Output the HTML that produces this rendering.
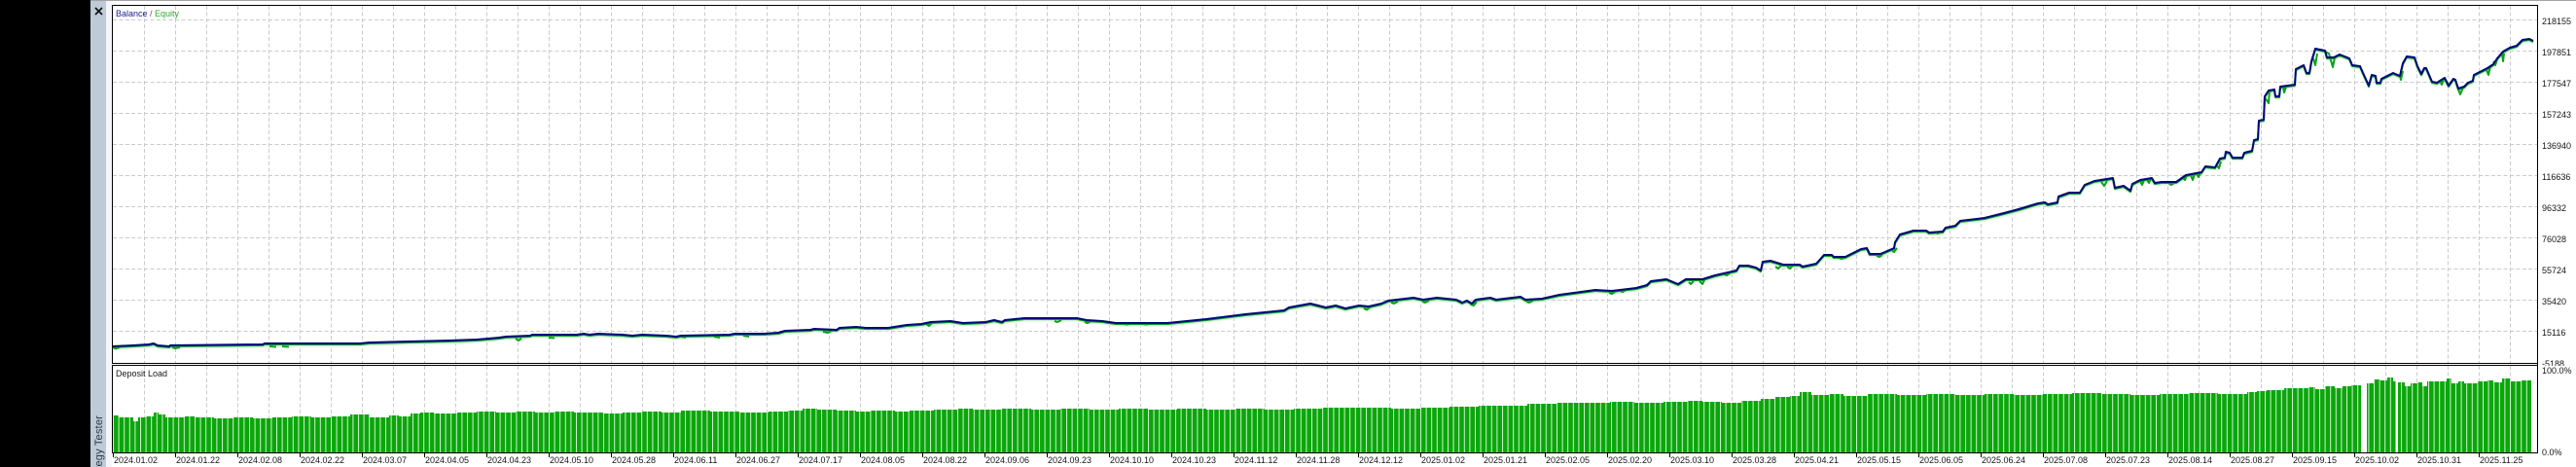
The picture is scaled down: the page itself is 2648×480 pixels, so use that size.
<!DOCTYPE html>
<html lang="en">
<head>
<meta charset="utf-8">
<title>Strategy Tester</title>
<style>
html,body{margin:0;padding:0;background:#000;width:2648px;height:480px;overflow:hidden}
svg{display:block}
text{font-family:"Liberation Sans",sans-serif;font-size:9px;fill:#151515}
</style>
</head>
<body>
<svg xmlns="http://www.w3.org/2000/svg" width="2648" height="480" viewBox="0 0 2648 480">
<defs>
<pattern id="gaps" x="116" y="0" width="5.6" height="10" patternUnits="userSpaceOnUse"><rect width="1" height="10" fill="#d2f0d2"/></pattern>
<path id="bal" d="M116 356L137 355L153 354L158 353L162 355L174 356L175 355L270 354L272 353L370 353L380 352L420 351L462 350L490 349L502 348L513 347L520 346L545 345L547 344L593 344L600 343L606 344L615 343L640 344L650 345L660 344L685 345L695 346L700 345L750 344L755 343L785 343L800 342L807 340L833 339L837 338L860 339L863 337L880 336L890 337L913 337L932 334L947 333L957 331L977 330L990 332L1013 331L1022 329L1030 331L1033 329L1053 327L1067 327L1087 327L1107 327L1117 329L1133 330L1147 332L1200 332L1240 328L1280 323L1320 319L1325 316L1347 312L1363 316L1373 314L1383 317L1397 314L1407 315L1420 312L1427 309L1453 306L1463 308L1477 306L1497 308L1503 311L1508 309L1513 312L1517 308L1532 306L1538 308L1563 305L1568 308L1585 307L1603 303L1640 298L1657 299L1682 296L1693 293L1697 289L1713 287L1725 292L1733 287L1750 287L1763 283L1785 278L1788 273L1797 273L1805 275L1810 278L1812 269L1820 268L1833 272L1850 272L1853 274L1867 271L1875 262L1883 262L1885 264L1897 264L1913 256L1919 255L1922 261L1933 261L1947 255L1948 249L1953 241L1967 237L1980 237L1983 239L1997 238L2000 234L2010 232L2015 227L2040 224L2060 219L2075 215L2095 209L2102 208L2105 210L2115 208L2116 202L2127 198L2138 198L2143 190L2153 186L2172 183L2174 193L2183 191L2190 196L2192 189L2200 185L2212 183L2215 188L2222 187L2237 187L2247 180L2263 177L2267 171L2277 172L2282 163L2287 162L2288 156L2292 157L2295 162L2305 162L2307 157L2315 155L2317 144L2321 143L2322 124L2327 123L2328 99L2332 93L2338 92L2339 99L2343 99L2344 89L2359 87L2360 71L2368 67L2371 75L2374 75L2376 63L2380 50L2390 52L2392 59L2399 59L2405 56L2415 60L2418 67L2426 68L2430 77L2435 88L2438 77L2442 78L2443 85L2447 85L2448 81L2460 75L2467 78L2470 65L2474 58L2482 59L2485 68L2489 76L2492 70L2494 70L2500 84L2505 85L2513 80L2517 88L2522 81L2524 82L2527 91L2533 89L2537 85L2542 83L2543 77L2557 70L2563 66L2567 60L2573 53L2580 49L2587 47L2593 41L2600 40L2604 42"/>
</defs>

<!-- window chrome -->
<rect x="93" y="0" width="2555" height="480" fill="#fff"/>
<rect x="93" y="0" width="2555" height="1" fill="#a3a3a3"/>
<rect x="93" y="1" width="16" height="479" fill="#bdcbd9"/>
<rect x="109" y="1" width="6" height="479" fill="#f4f5f6"/>
<path d="M98 8L105 15M105 8L98 15" stroke="#111" stroke-width="1.7" fill="none"/>

<!-- grid -->
<g stroke="#cbcbcb" stroke-width="1" stroke-dasharray="4 2.4" fill="none" shape-rendering="crispEdges">
<path d="M116 20.5H2608M116 52.5H2608M116 84.5H2608M116 116.5H2608M116 148.5H2608M116 180.5H2608M116 212.5H2608M116 244.5H2608M116 276.5H2608M116 308.5H2608M116 340.5H2608"/>
<path d="M148.500 6V373M180.500 6V373M212.500 6V373M244.500 6V373M276.500 6V373M308.500 6V373M340.500 6V373M372.500 6V373M404.500 6V373M436.500 6V373M468.500 6V373M500.500 6V373M532.500 6V373M564.500 6V373M596.500 6V373M628.500 6V373M660.500 6V373M692.500 6V373M724.500 6V373M756.500 6V373M788.500 6V373M820.500 6V373M852.500 6V373M884.500 6V373M916.500 6V373M948.500 6V373M980.500 6V373M1012.500 6V373M1044.500 6V373M1076.500 6V373M1108.500 6V373M1140.500 6V373M1172.500 6V373M1204.500 6V373M1236.500 6V373M1268.500 6V373M1300.500 6V373M1332.500 6V373M1364.500 6V373M1396.500 6V373M1428.500 6V373M1460.500 6V373M1492.500 6V373M1524.500 6V373M1556.500 6V373M1588.500 6V373M1620.500 6V373M1652.500 6V373M1684.500 6V373M1716.500 6V373M1748.500 6V373M1780.500 6V373M1812.500 6V373M1844.500 6V373M1876.500 6V373M1908.500 6V373M1940.500 6V373M1972.500 6V373M2004.500 6V373M2036.500 6V373M2068.500 6V373M2100.500 6V373M2132.500 6V373M2164.500 6V373M2196.500 6V373M2228.500 6V373M2260.500 6V373M2292.500 6V373M2324.500 6V373M2356.500 6V373M2388.500 6V373M2420.500 6V373M2452.500 6V373M2484.500 6V373M2516.500 6V373M2548.500 6V373M2580.500 6V373"/>
</g>

<!-- equity / balance curves -->
<g fill="none" stroke-linejoin="round">
<use href="#bal" stroke="#d8f5d8" stroke-width="2" transform="translate(0 2.5)"/>
<use href="#bal" stroke="#0b9e2a" stroke-width="2" transform="translate(0 1)"/>
<path stroke="#0ba01a" stroke-width="2" d="M116 357L119 358.500L123 357M177 357L180 358L185 357M277 356L284 356.500M290 356L297 356.500M530 348L533 350L536 348M564 347L570 347.500M699 346L705 347M734 346L740 347M764 345L770 346M846 341L851 342L855 340M952 333L955 335L958 332M1084 330L1087 331L1091 329M1115 331L1118 332L1122 330M1155 333L1158 333.500L1162 333M1175 333L1178 333.500L1182 333M1402 317L1405 318.500L1408 316M1430 311L1433 312L1437 310M1462 310L1465 311L1469 309M1512 313L1515 314L1518 310M1569 310L1572 311L1576 309M1654 301L1657 302L1660 300M1665 299L1668 300L1671 298M1736 290L1738 292L1741 289M1747 289L1750 292L1752 288M1772 282L1775 283L1778 281M1825 274L1828 276L1831 273M1837 274L1840 276L1843 273M1890 265L1893 266L1897 265M1929 263L1932 264L1935 262M1945 258L1947 259L1950 255M1989 239L1992 240L1995 238M2160 187L2163 191L2166 186M2200 186L2202 190L2204 185M2207 185L2209 188L2211 184M2229 188L2232 190L2235 188M2244 183L2246 185L2248 180M2252 180L2254 185L2256 179M2258 179L2260 182L2262 178M2278 169L2281 173L2283 166M2328 100L2332 106L2333 93M2347 90L2348 95L2350 89M2378 60L2380 67L2382 55M2390 53L2394 55L2398 69L2400 59M2467 77L2468 82L2470 73M2508 83L2510 87L2512 82M2527 92L2529 97L2532 90M2556 72L2558 77L2560 68M2563 63L2565 67L2567 61M2572 55L2573 63L2574 55"/>
<use href="#bal" stroke="#00087a" stroke-width="2"/>
</g>

<!-- price labels -->
<g>
<text x="2613" y="25">218155</text>
<text x="2613" y="57">197851</text>
<text x="2613" y="89">177547</text>
<text x="2613" y="121">157243</text>
<text x="2613" y="153">136940</text>
<text x="2613" y="185">116636</text>
<text x="2613" y="217">96332</text>
<text x="2613" y="249">76028</text>
<text x="2613" y="281">55724</text>
<text x="2613" y="313">35420</text>
<text x="2613" y="345">15116</text>
<text x="2613" y="377">-5188</text>
</g>
<rect x="115" y="374" width="2494" height="106" fill="#fff"/>
<rect x="2609" y="376" width="39" height="104" fill="#fff"/>

<text transform="translate(105 427) rotate(-90)" text-anchor="end" style="font-size:11px;fill:#2b3640;letter-spacing:.2px">Strategy Tester</text>

<!-- sub window grid -->
<g stroke="#cbcbcb" stroke-width="1" stroke-dasharray="4 2.4" fill="none" shape-rendering="crispEdges">
<path d="M148.500 376V465M180.500 376V465M212.500 376V465M244.500 376V465M276.500 376V465M308.500 376V465M340.500 376V465M372.500 376V465M404.500 376V465M436.500 376V465M468.500 376V465M500.500 376V465M532.500 376V465M564.500 376V465M596.500 376V465M628.500 376V465M660.500 376V465M692.500 376V465M724.500 376V465M756.500 376V465M788.500 376V465M820.500 376V465M852.500 376V465M884.500 376V465M916.500 376V465M948.500 376V465M980.500 376V465M1012.500 376V465M1044.500 376V465M1076.500 376V465M1108.500 376V465M1140.500 376V465M1172.500 376V465M1204.500 376V465M1236.500 376V465M1268.500 376V465M1300.500 376V465M1332.500 376V465M1364.500 376V465M1396.500 376V465M1428.500 376V465M1460.500 376V465M1492.500 376V465M1524.500 376V465M1556.500 376V465M1588.500 376V465M1620.500 376V465M1652.500 376V465M1684.500 376V465M1716.500 376V465M1748.500 376V465M1780.500 376V465M1812.500 376V465M1844.500 376V465M1876.500 376V465M1908.500 376V465M1940.500 376V465M1972.500 376V465M2004.500 376V465M2036.500 376V465M2068.500 376V465M2100.500 376V465M2132.500 376V465M2164.500 376V465M2196.500 376V465M2228.500 376V465M2260.500 376V465M2292.500 376V465M2324.500 376V465M2356.500 376V465M2388.500 376V465M2420.500 376V465M2452.500 376V465M2484.500 376V465M2516.500 376V465M2548.500 376V465M2580.500 376V465"/>
</g>

<!-- deposit load bars -->
<g>
<clipPath id="bc"><path d="M116 465V427H122V429H134V429H137V433H142V429H150V428H158V424H163V426H170V429H190V428H200V429H220V430H240V429H260V430H280V429H300V428H320V429H340V428H360V426H380V429H400V427H410V428H422V425H432V424H446V425H470V424H490V423H510V424H530V423H550V424H570V423H590V424H620V425H640V424H660V423H680V424H700V422H730V423H760V424H790V423H810V422H825V420H840V421H860V422H880V423H895V422H920V423H935V422H960V421H985V420H1000V421H1030V420H1060V421H1090V420H1120V421H1150V420H1180V421H1210V420H1240V421H1270V420H1300V421H1330V420H1360V419H1400V419H1430V420H1460V419H1490V418H1520V417H1550V417H1570V415H1600V414H1630V414H1655V413H1680V414H1710V413H1735V412H1750V413H1770V414H1790V412H1810V410H1825V408H1840V407H1850V403H1862V406H1880V405H1895V407H1920V405H1950V406H1980V405H2010V406H2040V405H2070V406H2100V405H2130V404H2160V405H2190V406H2220V405H2250V404H2280V405H2300V405H2310V403H2320V402H2330V401H2345V401H2348V399H2365V399H2373V398H2380V400H2390V397H2400V399H2408V397H2417V396H2427V465H2433V394H2440V390H2447V391H2454V388H2460V392H2463V465H2465V393H2472V397H2478V394H2485V393H2490V397H2495V392H2507V392H2515V389H2520V394H2527V392H2533V394H2547V392H2557V391H2563V393H2572V389H2580V392H2592V391H2602V465Z"/></clipPath>
<rect x="116" y="385" width="2486" height="80" fill="#0aa60a" clip-path="url(#bc)"/>
<rect x="116" y="385" width="2486" height="80" fill="url(#gaps)" clip-path="url(#bc)"/>
</g>

<!-- frames and ticks -->
<g fill="none" stroke="#000" stroke-width="1" shape-rendering="crispEdges">
<path d="M115.500 5.500H2608.500V373.500H115.500Z"/>
<path d="M2608.500 373.500V465.500H115.500V375.500H2608.500"/>
<path d="M116.500 465V470M180.500 465V470M244.500 465V470M308.500 465V470M372.500 465V470M436.500 465V470M500.500 465V470M564.500 465V470M628.500 465V470M692.500 465V470M756.500 465V470M820.500 465V470M884.500 465V470M948.500 465V470M1012.500 465V470M1076.500 465V470M1140.500 465V470M1204.500 465V470M1268.500 465V470M1332.500 465V470M1396.500 465V470M1460.500 465V470M1524.500 465V470M1588.500 465V470M1652.500 465V470M1716.500 465V470M1780.500 465V470M1844.500 465V470M1908.500 465V470M1972.500 465V470M2036.500 465V470M2100.500 465V470M2164.500 465V470M2228.500 465V470M2292.500 465V470M2356.500 465V470M2420.500 465V470M2484.500 465V470M2548.500 465V470"/>
</g>

<!-- titles -->
<text x="119" y="17"><tspan style="fill:#1c1c8a">Balance</tspan><tspan style="fill:#555"> / </tspan><tspan style="fill:#33a833">Equity</tspan></text>
<text x="119" y="387">Deposit Load</text>
<text x="2613" y="384">100.0%</text>
<text x="2613" y="468">0.0%</text>

<!-- dates -->
<g>
<text x="117" y="476">2024.01.02</text>
<text x="181" y="476">2024.01.22</text>
<text x="245" y="476">2024.02.08</text>
<text x="309" y="476">2024.02.22</text>
<text x="373" y="476">2024.03.07</text>
<text x="437" y="476">2024.04.05</text>
<text x="501" y="476">2024.04.23</text>
<text x="565" y="476">2024.05.10</text>
<text x="629" y="476">2024.05.28</text>
<text x="693" y="476">2024.06.11</text>
<text x="757" y="476">2024.06.27</text>
<text x="821" y="476">2024.07.17</text>
<text x="885" y="476">2024.08.05</text>
<text x="949" y="476">2024.08.22</text>
<text x="1013" y="476">2024.09.06</text>
<text x="1077" y="476">2024.09.23</text>
<text x="1141" y="476">2024.10.10</text>
<text x="1205" y="476">2024.10.23</text>
<text x="1269" y="476">2024.11.12</text>
<text x="1333" y="476">2024.11.28</text>
<text x="1397" y="476">2024.12.12</text>
<text x="1461" y="476">2025.01.02</text>
<text x="1525" y="476">2025.01.21</text>
<text x="1589" y="476">2025.02.05</text>
<text x="1653" y="476">2025.02.20</text>
<text x="1717" y="476">2025.03.10</text>
<text x="1781" y="476">2025.03.28</text>
<text x="1845" y="476">2025.04.21</text>
<text x="1909" y="476">2025.05.15</text>
<text x="1973" y="476">2025.06.05</text>
<text x="2037" y="476">2025.06.24</text>
<text x="2101" y="476">2025.07.08</text>
<text x="2165" y="476">2025.07.23</text>
<text x="2229" y="476">2025.08.14</text>
<text x="2293" y="476">2025.08.27</text>
<text x="2357" y="476">2025.09.15</text>
<text x="2421" y="476">2025.10.02</text>
<text x="2485" y="476">2025.10.31</text>
<text x="2549" y="476">2025.11.25</text>
</g>
</svg>
</body>
</html>
